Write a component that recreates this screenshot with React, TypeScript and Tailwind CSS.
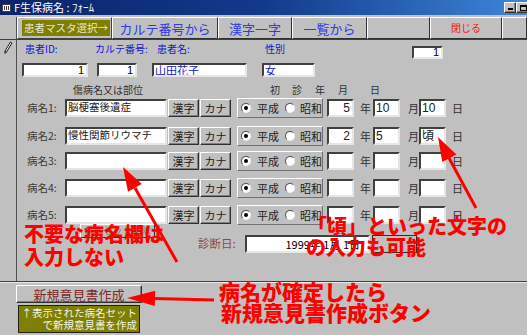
import React from "react";

function Box({ className = "", children }: { className?: string; children?: React.ReactNode }) {
  return (
    <div
      className={`flex shrink-0 bg-white border-2 border-t-[#404040] border-l-[#404040] border-r-[#e6e6e6] border-b-[#e6e6e6] overflow-hidden whitespace-nowrap leading-none ${className}`}
    >
      {children}
    </div>
  );
}

function Btn({ className = "", children }: { className?: string; children?: React.ReactNode }) {
  return (
    <div
      className={`flex shrink-0 items-center justify-center bg-[#c0c0c0] border border-t-white border-l-white border-r-[#303030] border-b-[#303030] shadow-[inset_-1px_-1px_0_#808080] whitespace-nowrap leading-none ${className}`}
    >
      {children}
    </div>
  );
}

function Radio({ on }: { on?: boolean }) {
  return (
    <span className="relative inline-block shrink-0 w-[10px] h-[10px] rounded-full bg-white border border-t-[#505050] border-l-[#505050] border-r-[#f0f0f0] border-b-[#f0f0f0]">
      {on && <span className="absolute left-[2px] top-[2px] w-[4px] h-[4px] rounded-full bg-black" />}
    </span>
  );
}

function DRow({
  className,
  n,
  name,
  y,
  m,
  d,
}: {
  className: string;
  n: number;
  name?: string;
  y?: string;
  m?: string;
  d?: string;
}) {
  return (
    <div className={`flex items-center h-[20px] ${className}`}>
      <span className="ml-[10px] w-[38px] text-[10.5px] leading-none text-[#383838]">病名{n}:</span>
      <Box className="w-[102px] h-[18px] items-start pl-[1px] pt-[1px] text-[10.5px] text-[#202020]">{name}</Box>
      <Btn className="ml-[1px] w-[31px] h-[18px] text-[11px] text-[#202020]">漢字</Btn>
      <Btn className="ml-[1px] w-[31px] h-[18px] text-[11px] text-[#202020]">カナ</Btn>
      <div className="ml-[6px] w-[86px] h-[20px] shrink-0 flex items-center border border-t-white border-l-white border-r-[#707070] border-b-[#707070] text-[11px] leading-none text-[#202020]">
        <span className="ml-[3px]" />
        <Radio on />
        <span className="ml-[6px] w-[22px]">平成</span>
        <span className="ml-[6px]" />
        <Radio />
        <span className="ml-[5px]">昭和</span>
      </div>
      <Box className="ml-[4px] w-[27px] h-[18px] items-center justify-end pr-[2px] text-[12px] font-['Liberation_Sans',sans-serif]">
        {y}
      </Box>
      <span className="ml-[6px] w-[13px] text-[11px] leading-none text-[#303030]">年</span>
      <Box className="w-[27px] h-[18px] items-center pl-[1px] text-[12px] font-['Liberation_Sans',sans-serif]">{m}</Box>
      <span className="ml-[8px] w-[11px] text-[11px] leading-none text-[#303030]">月</span>
      <Box className="w-[27px] h-[18px] items-center pl-[1px] text-[12px] font-['Liberation_Sans','Noto_Sans_CJK_JP',sans-serif]">
        {d}
      </Box>
      <span className="ml-[6px] text-[11px] leading-none text-[#303030]">日</span>
    </div>
  );
}

const RED = "absolute whitespace-nowrap text-[#ff0000] font-black leading-none tracking-[0px]";

export default function App() {
  return (
    <div className="relative w-[527px] h-[335px] overflow-hidden bg-[#c0c0c0] font-['Noto_Sans_CJK_JP',sans-serif] text-[#202020]">
      {/* title bar */}
      <div className="flex items-center h-[15px] bg-gradient-to-r from-[#0a246a] via-[#123a8a] to-[#3f86d8] overflow-hidden">
        <div className="ml-[2px] w-[9px] h-[8px] bg-white border border-[#404040] grid grid-cols-3 gap-px p-px">
          <span className="bg-[#404040]" />
          <span className="bg-[#404040]" />
          <span className="bg-[#404040]" />
        </div>
        <span className="ml-[3px] text-[11px] leading-none text-white">F生保病名 : ﾌｫｰﾑ</span>
        <div className="ml-auto flex mr-[-3px]">
          <Btn className="w-[12px] h-[11px] items-end text-[9px] text-black">
            <span className="block w-[5px] h-[2px] bg-black mb-[2px]" />
          </Btn>
          <Btn className="w-[14px] h-[11px]">
            <span className="block w-[7px] h-[6px] border border-black border-t-2" />
          </Btn>
        </div>
      </div>
      <div className="h-[2px]" />

      {/* header tabs */}
      <div className="flex h-[23px] border-b border-[#404040]">
        <div className="w-[17px] border-r border-[#505050]" />
        <div className="w-[95px] h-[22px] flex items-center border border-t-white border-l-white border-r-[#404040] border-b-[#404040]">
          <div className="ml-[4px] w-[88px] h-[16px] bg-[#7f7f00] flex items-center justify-center text-[10.5px] leading-none text-[#e8e8d8]">
            患者マスタ選択→
          </div>
        </div>
        <Btn className="w-[106px] h-[22px] text-[13px] text-[#2b3be6] shadow-none">カルテ番号から</Btn>
        <Btn className="w-[74px] h-[22px] text-[13px] text-[#2b3be6] shadow-none">漢字一字</Btn>
        <Btn className="w-[75px] h-[22px] text-[13px] text-[#2b3be6] shadow-none">一覧から</Btn>
        <Btn className="w-[63px] h-[22px] shadow-none" />
        <Btn className="w-[72px] h-[22px] text-[10px] text-[#ff1010] shadow-none">閉じる</Btn>
        <Btn className="flex-1 h-[22px] shadow-none" />
      </div>

      {/* detail */}
      <div className="flex h-[241px]">
        <div className="w-[17px] border-r border-[#505050] shrink-0">
          <svg width="10" height="14" viewBox="0 0 10 14" className="ml-[3px] mt-[1px]">
            <path d="M7.5 1 L9 2 L3.5 11 L2 12.5 L2 10 Z" fill="#f0f0f0" stroke="#202020" strokeWidth="1" />
            <path d="M2 10 L3.5 11" stroke="#202020" strokeWidth="1" />
          </svg>
        </div>
        <div className="flex-1 flex flex-col">
          {/* labels */}
          <div className="flex items-start h-[16px] mt-[3px] text-[10px] leading-[12px] text-[#1414d0]">
            <span className="ml-[8px] w-[70px]">患者ID:</span>
            <span className="w-[62px]">カルテ番号:</span>
            <span className="w-[108px]">患者名:</span>
            <span className="w-[40px]">性別</span>
            <Box className="ml-[107px] mt-[3px] w-[31px] h-[13px] items-center justify-end pr-[2px] text-[11px] text-black font-['Liberation_Sans',sans-serif]">
              1
            </Box>
          </div>
          {/* patient fields */}
          <div className="flex h-[14px] mt-[4px]">
            <Box className="ml-[5px] w-[66px] h-[14px] items-center justify-end pr-[2px] text-[11px] text-black font-['Liberation_Sans',sans-serif]">
              1
            </Box>
            <Box className="ml-[9px] w-[40px] h-[14px] items-center justify-end pr-[2px] text-[11px] text-black font-['Liberation_Sans',sans-serif]">
              1
            </Box>
            <Box className="ml-[15px] w-[95px] h-[14px] items-center pl-[1px] text-[11px] text-[#1414d0]">山田花子</Box>
            <Box className="ml-[15px] w-[53px] h-[14px] items-center pl-[1px] text-[11px] text-[#1414d0]">女</Box>
          </div>
          {/* column headers */}
          <div className="flex h-[12px] mt-[7px] text-[10px] leading-[12px] text-[#303030]">
            <span className="ml-[56px] w-[80px]">傷病名又は部位</span>
            <span className="ml-[117px] w-[22px]">初</span>
            <span className="w-[23px]">診</span>
            <span className="w-[23px]">年</span>
            <span className="w-[32px]">月</span>
            <span>日</span>
          </div>
          <DRow className="mt-[2px]" n={1} name="脳梗塞後遺症" y="5" m="10" d="10" />
          <DRow className="mt-[8px]" n={2} name="慢性関節リウマチ" y="2" m="5" d="頃" />
          <DRow className="mt-[5px]" n={3} />
          <DRow className="mt-[7px]" n={4} />
          <DRow className="mt-[7px]" n={5} />
          {/* misc + diagnosis date */}
          <div className="flex items-start -mt-px">
            <Btn className="ml-[63px] w-[75px] h-[14px] text-[9.5px] text-[#3c9c5c] shadow-none">病名セット削除</Btn>
            <div className="flex items-center mt-[11px]">
              <span className="ml-[43px] w-[47px] text-[11.5px] leading-none text-[#8c4848]">診断日:</span>
              <Box className="w-[125px] h-[18px] items-center justify-end pr-[8px] text-[11px] text-black">1999年 1月 1日</Box>
              <div className="ml-[2px] w-[45px] h-[18px] border border-[#303030] bg-[#c0c0c0]" />
            </div>
          </div>
        </div>
      </div>

      {/* footer */}
      <div className="flex flex-col border-t border-[#404040] shadow-[inset_0_1px_0_#e8e8e8] h-[54px]">
        <Btn className="mt-[3px] ml-[16px] w-[126px] h-[18px] text-[13px] text-[#802828]">新規意見書作成</Btn>
        <div className="mt-[2px] ml-[18px] w-[122px] h-[28px] bg-[#7f7f00] border border-[#202020] flex flex-col items-end justify-center pr-[2px] text-[10.5px] leading-[12px] text-[#f4f4e8] whitespace-nowrap">
          <span>↑表示された病名セット</span>
          <span>で新規意見書を作成</span>
        </div>
      </div>

      {/* annotation arrows */}
      <svg className="absolute left-0 top-0 pointer-events-none" width="527" height="335" viewBox="0 0 527 335">
        <line x1="177" y1="262" x2="135" y2="188" stroke="#ff0000" strokeWidth="3" />
        <polygon points="123,167 141.8,183.9 128,191.8" fill="#ff0000" />
        <line x1="476" y1="208" x2="449" y2="158" stroke="#ff0000" strokeWidth="3" />
        <polygon points="438,137 456.4,154.4 442.3,162" fill="#ff0000" />
        <line x1="214" y1="300" x2="154" y2="298.5" stroke="#ff0000" strokeWidth="3" />
        <polygon points="127,298 155.2,290.8 154.8,306" fill="#ff0000" />
      </svg>

      {/* annotation texts */}
      <div className={`${RED} left-[307px] top-[216px] text-[20px]`}>「頃」といった文字の</div>
      <div className={`${RED} left-[306px] top-[237px] text-[20px]`}>の入力も可能</div>
      <div className={`${RED} left-[24px] top-[224px] text-[20px]`}>不要な病名欄は</div>
      <div className={`${RED} left-[24px] top-[247px] text-[20px]`}>入力しない</div>
      <div className={`${RED} left-[219px] top-[281px] text-[21px]`}>病名が確定したら</div>
      <div className={`${RED} left-[221px] top-[302px] text-[21px]`}>新規意見書作成ボタン</div>
    </div>
  );
}
